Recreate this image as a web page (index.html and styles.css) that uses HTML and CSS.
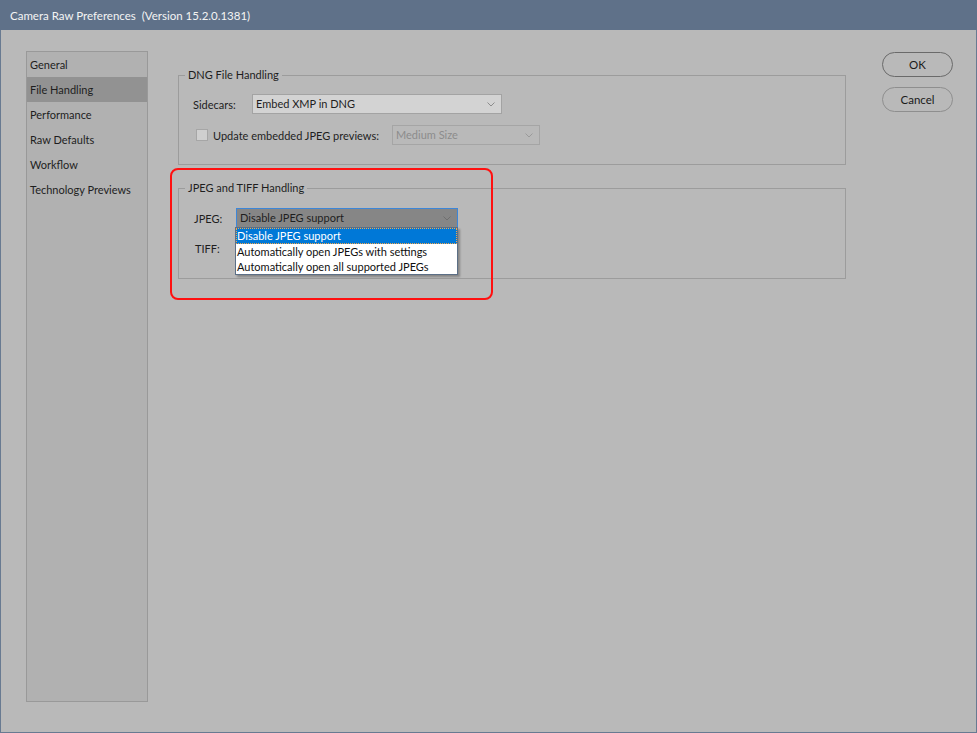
FILE: index.html
```html
<!DOCTYPE html>
<html lang="en">
<head>
<meta charset="utf-8">
<title>Camera Raw Preferences</title>
<link rel="stylesheet" href="styles.css">
</head>
<body>
<div class="window">
  <div class="titlebar">Camera Raw Preferences  (Version 15.2.0.1381)</div>
  <div class="client">
    <nav class="sidebar">
      <div class="nav-item">General</div>
      <div class="nav-item selected">File Handling</div>
      <div class="nav-item">Performance</div>
      <div class="nav-item">Raw Defaults</div>
      <div class="nav-item">Workflow</div>
      <div class="nav-item">Technology Previews</div>
    </nav>
    <main class="main">
      <fieldset class="group group-dng">
        <legend>DNG File Handling</legend>
        <div class="row row-sidecars">
          <span class="label label-sidecars">Sidecars:</span>
          <div class="select select-sidecars">
            <span class="select-text">Embed XMP in DNG</span>
            <svg class="chevron" width="8" height="5" viewBox="0 0 8 5"><polyline points="0.5,0.5 4,4 7.5,0.5" fill="none" stroke="#8c8c8c" stroke-width="1"/></svg>
          </div>
        </div>
        <div class="row row-update">
          <span class="checkbox"></span>
          <span class="label label-update">Update embedded JPEG previews:</span>
          <div class="select select-disabled">
            <span class="select-text">Medium Size</span>
            <svg class="chevron" width="8" height="5" viewBox="0 0 8 5"><polyline points="0.5,0.5 4,4 7.5,0.5" fill="none" stroke="#9a9a9a" stroke-width="1"/></svg>
          </div>
        </div>
      </fieldset>
      <fieldset class="group group-jpeg">
        <legend>JPEG and TIFF Handling</legend>
        <div class="row row-jpeg">
          <span class="label label-jpeg">JPEG:</span>
          <div class="select-wrap">
            <div class="select select-open">
              <span class="select-text">Disable JPEG support</span>
              <svg class="chevron" width="8" height="5" viewBox="0 0 8 5"><polyline points="0.5,0.5 4,4 7.5,0.5" fill="none" stroke="#6f6f6f" stroke-width="1"/></svg>
            </div>
            <ul class="dropdown">
              <li class="option option-active">Disable JPEG support</li>
              <li class="option">Automatically open JPEGs with settings</li>
              <li class="option">Automatically open all supported JPEGs</li>
            </ul>
          </div>
        </div>
        <div class="row row-tiff">
          <span class="label label-tiff">TIFF:</span>
          <div class="select select-tiff">
            <span class="select-text"></span>
          </div>
        </div>
      </fieldset>
      <div class="annotation"></div>
    </main>
    <div class="buttons">
      <button class="btn btn-default">OK</button>
      <button class="btn">Cancel</button>
    </div>
  </div>
</div>
</body>
</html>
```

FILE: styles.css
```css
* { box-sizing: border-box; }

html, body {
  margin: 0;
  padding: 0;
  background: #b9b9b9;
}

body {
  font-family: Lato, "Liberation Sans", sans-serif;
  font-size: 11px;
  color: #1e1e1e;
}

.window {
  width: 977px;
  height: 733px;
  background: #b9b9b9;
  border: 1px solid #687a91;
  border-top: none;
  display: flex;
  flex-direction: column;
}

.titlebar {
  height: 30px;
  margin: 0 -1px;
  background: #5f7189;
  color: #f4f4f4;
  font-size: 11.5px;
  line-height: 31px;
  padding-left: 10px;
  white-space: pre;
}

.client {
  display: flex;
  align-items: flex-start;
  padding: 21px 0 0 25px;
  flex: 1;
}

/* Sidebar */
.sidebar {
  width: 122px;
  height: 651px;
  background: #b1b1b1;
  border: 1px solid #999999;
}

.nav-item {
  height: 25px;
  line-height: 25px;
  padding-left: 3px;
  white-space: nowrap;
}

.nav-item.selected {
  background: #929292;
}

/* Main */
.main {
  position: relative;
  width: 668px;
  margin-left: 30px;
  padding-top: 16px;
}

.group {
  margin: 0;
  padding: 0;
  border: 1px solid #9c9c9c;
  min-width: 0;
}

.group legend {
  margin-left: 6px;
  padding: 0 3px;
  line-height: 16px;
  height: 16px;
}

.group-dng {
  padding-bottom: 19px;
}

.group-jpeg {
  margin-top: 15px;
  padding-bottom: 20px;
}

.row {
  display: flex;
  align-items: center;
  height: 20px;
}

.row-sidecars {
  margin-top: 11px;
  padding-left: 14px;
}

.row-update {
  margin-top: 11px;
  padding-left: 17px;
}

.row-jpeg {
  margin-top: 12px;
  padding-left: 15px;
}

.row-tiff {
  margin-top: 10px;
  padding-left: 16px;
}

.label {
  white-space: nowrap;
  flex: none;
}

.label-sidecars { width: 59px; }
.label-update { width: 179px; margin-left: 5px; }
.label-jpeg { width: 42px; }
.label-tiff { width: 41px; }

.checkbox {
  width: 12px;
  height: 12px;
  background: #cfcfcf;
  border: 1px solid #a6a6a6;
  flex: none;
}

/* Selects */
.select {
  display: flex;
  align-items: center;
  justify-content: space-between;
  height: 20px;
  border: 1px solid #a3a3a3;
  background: #d3d3d3;
  padding: 0 6px 0 3px;
  white-space: nowrap;
}

.select-text {
  line-height: 18px;
}

.chevron { flex: none; margin-top: 1px; }

.select-sidecars { width: 250px; }

.select-disabled {
  width: 148px;
  background: #b9b9b9;
  border-color: #a5a5a5;
  color: #8c8c8c;
}

.select-wrap {
  position: relative;
}

.select-open {
  width: 222px;
  background: #868686;
  border-color: #3d86d8;
}

.select-tiff {
  width: 221px;
}

.dropdown {
  position: absolute;
  top: 19px;
  left: -1px;
  width: 223px;
  margin: 0;
  padding: 0;
  list-style: none;
  background: #ffffff;
  border: 1px solid #5c6f86;
  box-shadow: 2px 2px 2px rgba(0, 0, 0, 0.28);
  z-index: 2;
}

.option {
  height: 15px;
  line-height: 15px;
  padding-left: 1px;
  color: #101010;
  white-space: nowrap;
}

.option-active {
  height: 16px;
  line-height: 15px;
  background: #0078d7;
  color: #ffffff;
  outline: 1px dotted #f3a64a;
  outline-offset: -1px;
}

/* Annotation */
.annotation {
  position: absolute;
  left: -8px;
  top: 117px;
  width: 323px;
  height: 132px;
  border: 2px solid #ff1010;
  border-radius: 8px;
  pointer-events: none;
}

/* Buttons */
.buttons {
  display: flex;
  flex-direction: column;
  gap: 10px;
  margin-left: 36px;
  margin-top: 1px;
}

.btn {
  width: 71px;
  height: 25px;
  border-radius: 13px;
  border: 1px solid #6a6a6a;
  background: transparent;
  font-family: Lato, "Liberation Sans", sans-serif;
  font-size: 11.5px;
  color: #1a1a1a;
  padding: 0;
}

.btn:not(.btn-default) {
  border-color: #8e8e8e;
}
```
